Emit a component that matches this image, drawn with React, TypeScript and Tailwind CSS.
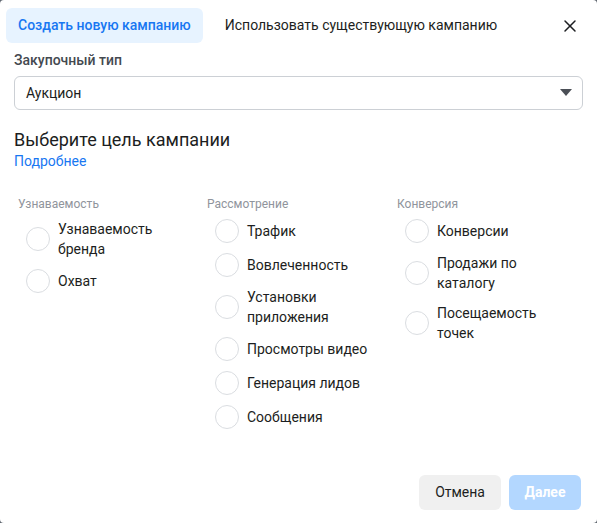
import { X } from 'lucide-react'

const COLUMNS = [
  { title: 'Узнаваемость', items: [['Узнаваемость', 'бренда'], ['Охват']] },
  {
    title: 'Рассмотрение',
    items: [['Трафик'], ['Вовлеченность'], ['Установки', 'приложения'], ['Просмотры видео'], ['Генерация лидов'], ['Сообщения']],
  },
  { title: 'Конверсия', items: [['Конверсии'], ['Продажи по', 'каталогу'], ['Посещаемость', 'точек']] },
]

function Radio({ lines }: { lines: string[] }) {
  return (
    <label className="flex items-center gap-2 pl-2 cursor-pointer">
      <span className="w-6 h-6 rounded-full border border-[#dadde1] bg-white flex-shrink-0" />
      <span className="text-[14px] leading-[20px] text-[#1c1e21]">
        {lines.map((l) => (
          <span key={l} className="block">{l}</span>
        ))}
      </span>
    </label>
  )
}

export default function App() {
  return (
    <div className="w-[597px] h-[523px] bg-[#606770]" style={{ fontFamily: 'Roboto, "Noto Sans", sans-serif' }}>
      <div className="w-full h-full bg-white rounded-[4px] flex flex-col px-[14px] pt-2 pb-[13px]">
        <div className="flex items-center -ml-2 h-[35px]">
          <button className="h-[35px] px-[12px] rounded-[6px] bg-[#e7f3ff] text-[#1877f2] text-[14px] font-medium">
            Создать новую кампанию
          </button>
          <button className="h-[35px] px-[12px] ml-[10px] text-[14px] text-[#1c1e21]">
            Использовать существующую кампанию
          </button>
          <button className="ml-auto mr-[3px] text-[#1c1e21]">
            <X size={20} strokeWidth={1.8} />
          </button>
        </div>

        <div className="mt-[9px] text-[14px] leading-[16px] font-medium text-[#444950]">Закупочный тип</div>
        <div className="mt-[8px] h-[34px] border border-[#ccd0d5] rounded-[6px] flex items-center px-[11px]">
          <span className="text-[14px] text-[#1c1e21]">Аукцион</span>
          <svg className="ml-auto mr-[-1px]" width="12" height="8" viewBox="0 0 12 8">
            <path d="M0 0h12L6 7z" fill="#4b4f56" />
          </svg>
        </div>

        <div className="mt-[18px] text-[18px] leading-[24px] text-[#1c1e21]">Выберите цель кампании</div>
        <a className="text-[14px] leading-[18px] text-[#1877f2]">Подробнее</a>

        <div className="mt-[26px] grid grid-cols-[189px_190px_1fr] pl-1">
          {COLUMNS.map((col) => (
            <div key={col.title} className="flex flex-col">
              <div className="text-[12px] leading-[16px] text-[#90949c] mb-[7px]">{col.title}</div>
              <div className="flex flex-col gap-[10px]">
                {col.items.map((lines) => (
                  <Radio key={lines.join(' ')} lines={lines} />
                ))}
              </div>
            </div>
          ))}
        </div>

        <div className="mt-auto flex justify-end gap-2 mr-[2px]">
          <button className="h-[35px] px-[16px] rounded-[6px] bg-[#f0f0f0] text-[14px] text-[#1c1e21]">Отмена</button>
          <button className="h-[35px] w-[72px] rounded-[6px] bg-[#b3d7ff] text-[14px] font-bold text-white">Далее</button>
        </div>
      </div>
    </div>
  )
}
